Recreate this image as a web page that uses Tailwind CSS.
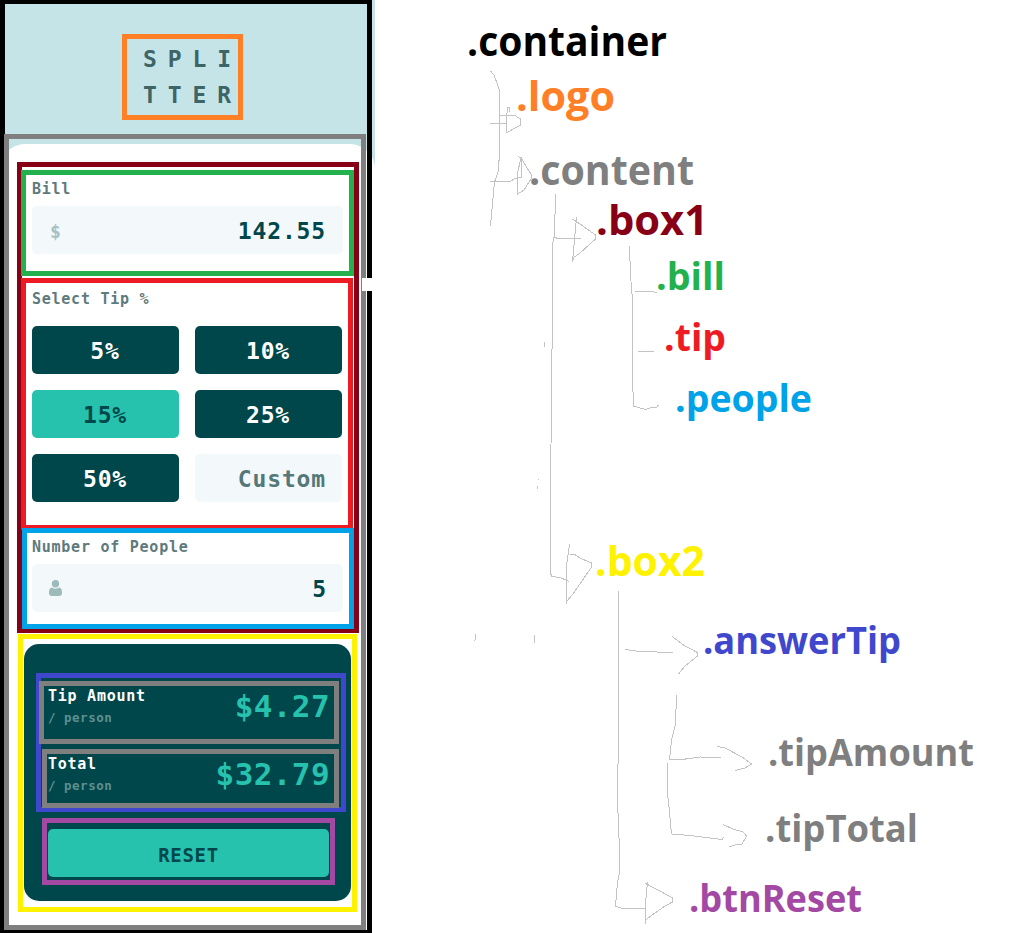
<!DOCTYPE html>
<html lang="en">
<head>
<meta charset="utf-8">
<title>Splitter structure</title>
<script src="https://cdn.jsdelivr.net/npm/@tailwindcss/browser@4"></script>
</head>
<body class="bg-white">
<div class="relative w-[1023px] h-[933px] overflow-hidden bg-white flex">

  <!-- Tip calculator -->
  <main class="w-[375px] h-[933px] shrink-0 flex flex-col bg-[#c5e4e7] font-['DejaVu_Sans_Mono',monospace] font-bold">
    <header class="h-36 shrink-0 flex flex-col pt-[41px] pl-[143px] text-[23px] leading-9 tracking-[10.9px] text-[#3d6467]">
      <div>SPLI</div>
      <div>TTER</div>
    </header>
    <section class="flex-1 bg-white rounded-t-[25px] flex flex-col pt-[35px] pl-8 pr-8 text-[#5e7a7d]">
      <div class="text-[15px] leading-5 tracking-[0.75px]">Bill</div>
      <div class="mt-[7px] w-[311px] h-12 rounded-[5px] bg-[#f3f8fb] flex items-center justify-between pl-[18px] pr-[17px]">
        <span class="text-[18px] text-[#a6c2c3] pt-0.5">$</span>
        <span class="text-[23px] tracking-[0.85px] text-[#00474b] pt-0.5">142.55</span>
      </div>

      <div class="mt-[35px] text-[15px] leading-5 tracking-[0.75px]">Select Tip %</div>
      <div class="mt-[17px] w-[310px] grid grid-cols-2 gap-4 text-[23px] tracking-[0.85px] text-white">
        <div class="h-12 rounded-[5px] bg-[#00474b] flex items-center justify-center pt-0.5 pr-px">5%</div>
        <div class="h-12 rounded-[5px] bg-[#00474b] flex items-center justify-center pt-0.5 pr-px">10%</div>
        <div class="h-12 rounded-[5px] bg-[#26c2ae] text-[#00474b] flex items-center justify-center pt-0.5 pr-px">15%</div>
        <div class="h-12 rounded-[5px] bg-[#00474b] flex items-center justify-center pt-0.5 pr-px">25%</div>
        <div class="h-12 rounded-[5px] bg-[#00474b] flex items-center justify-center pt-0.5 pr-px">50%</div>
        <div class="h-12 rounded-[5px] bg-[#f3f8fb] text-[#547878] flex items-center justify-end pt-0.5 pr-4">Custom</div>
      </div>

      <div class="mt-[35px] text-[15px] leading-5 tracking-[0.75px]">Number of People</div>
      <div class="mt-[7px] w-[311px] h-12 rounded-[5px] bg-[#f3f8fb] flex items-center justify-between pl-[17px] pr-[16px]">
        <svg class="w-[13px] h-4 fill-[#9dbbbb]" viewBox="0 0 13 16"><circle cx="6.5" cy="3.8" r="3.7"/><path d="M2.4 7.6Q6.5 9.9 10.6 7.6Q13 8.6 13 12.2V13.6Q13 16 10.6 16H2.4Q0 16 0 13.6V12.2Q0 8.6 2.4 7.6Z"/></svg>
        <span class="text-[23px] tracking-[0.85px] text-[#00474b] pt-0.5">5</span>
      </div>

      <div class="-ml-2 mt-8 w-[327px] h-[257px] rounded-[15px] bg-[#00474b] flex flex-col pl-6 pr-[21px] pt-[42px]">
        <div class="h-[68px] flex justify-between">
          <div>
            <div class="text-[15px] leading-5 tracking-[0.75px] text-white">Tip Amount</div>
            <div class="mt-0.5 text-[12.5px] leading-5 tracking-[0.5px] text-[#5e9092]">/ person</div>
          </div>
          <div class="text-[31px] leading-10 tracking-[0.4px] text-[#26c2ae]">$4.27</div>
        </div>
        <div class="h-[75px] flex justify-between">
          <div>
            <div class="text-[15px] leading-5 tracking-[0.75px] text-white">Total</div>
            <div class="mt-0.5 text-[12.5px] leading-5 tracking-[0.5px] text-[#5e9092]">/ person</div>
          </div>
          <div class="text-[31px] leading-10 tracking-[0.4px] text-[#26c2ae]">$32.79</div>
        </div>
        <div class="w-[281px] h-12 rounded-[5px] bg-[#26c2ae] text-[#00474b] text-[19px] tracking-[0.7px] flex items-center justify-center pt-1">RESET</div>
      </div>
    </section>
  </main>

  <!-- Coloured outlines drawn over the calculator -->
  <div class="absolute left-0 top-0 w-[372px] h-[933px] border-[5px] border-t-4 border-b-[3px] border-black"></div>
  <div class="absolute left-[122px] top-[34px] w-[121px] h-[86px] border-[5px] border-[#ff7f27]"></div>
  <div class="absolute left-1 top-[134px] w-[362px] h-[796px] border-[5px] border-[#7f7f7f]"></div>
  <div class="absolute left-[362px] top-[278px] w-[10px] h-[13px] bg-white"></div>
  <div class="absolute left-[17px] top-[162px] w-[342px] h-[471px] border-[5px] border-[#880015]"></div>
  <div class="absolute left-[21px] top-[170px] w-[333px] h-[106px] border-[5px] border-[#22b14c]"></div>
  <div class="absolute left-[21px] top-[278px] w-[332px] h-[252px] border-[5px] border-[#ed1c24]"></div>
  <div class="absolute left-[22px] top-[528px] w-[332px] h-[101px] border-[5px] border-[#00a2e8]"></div>
  <div class="absolute left-[18px] top-[634px] w-[339px] h-[278px] border-[5px] border-[#fff200]"></div>
  <div class="absolute left-[36px] top-[673px] w-[310px] h-[139px] border-[5px] border-[#3f48cc]"></div>
  <div class="absolute left-[39px] top-[681px] w-[300px] h-[63px] border-[5px] border-[#7f7f7f]"></div>
  <div class="absolute left-[42px] top-[749px] w-[297px] h-[59px] border-[5px] border-[#7f7f7f]"></div>
  <div class="absolute left-[42px] top-[818px] w-[293px] h-[67px] border-[5px] border-[#a349a4]"></div>

  <!-- Class tree: pencil strokes and labels -->
  <svg class="w-[648px] h-[933px] shrink-0" viewBox="375 0 648 933">
    <g class="fill-none stroke-[#c3c3c3]" stroke-width="1" shape-rendering="crispEdges">
      <path d="M490.500 71L494 75L499.500 90V155L498 172L494.500 182L490.500 226"/>
      <path d="M490 123.500H506M499 115.500H515L520.500 119V125L507 132.500L506.500 116L508 107H509.500V112"/>
      <path d="M490 181.500H510L514 179L521.500 177V158L518 156.500M521 158L531.500 175V178L524 190L517.500 194V173L521 158"/>
      <path d="M555.500 194L554.500 235L552.500 245V300L551.500 400L550.500 490V573L551.500 576L561 578L569.500 581.500"/>
      <path d="M553.500 237L558 238.500H580.500M572.500 219L580 224L595.500 235V239L579 254L574 257L572.500 261.500L574.500 240L576.500 217"/>
      <path d="M629.500 246L630.500 275L632.500 300V377L633.500 406L640 408L646 409.500L651 407.500L657 407L658.500 405M635 291.500H650L657 292.500M638 351.500H654"/>
      <path d="M544.500 342V347M538.500 479V480M537.500 486V489M475.500 634V639L474.500 641M534.500 635V643"/>
      <path d="M569.500 544L568.500 552L566.500 565V603.500M570 554H574L580 558L591.500 563V567L582 581L573 594L567 601"/>
      <path d="M618.500 591V730L617.500 800L619.500 850V873L617.500 882L615.500 906L622 908.500H645M625 649.500L640 651.500L673 652.500M672 636.500L685 646L697.500 652.500V656L685 666L678.500 674"/>
      <path d="M676.500 695L675.500 724L671.500 740L669.500 759.500H682L700 757L721 757.500M717 746.500L725 748L742 757L751.500 764L745 768L735 770.500"/>
      <path d="M667.500 763V793L669.500 812L671.500 834L690 835.500L722 839.500L724 837M723 824.500L733 829L743 832L746.500 836L742 844L735 845L729 847"/>
      <path d="M645.500 924V903L647.500 882M645.500 883.500L660 891L672.500 898V902L665 906L655 913L645.500 920"/>
    </g>
    <g class="font-['Open_Sans',sans-serif] font-bold text-[42px] [font-variant-ligatures:none]">
      <text class="fill-black" x="467" y="55.500" textLength="200" lengthAdjust="spacingAndGlyphs">.container</text>
      <text class="fill-[#ff7f27]" x="516" y="111" textLength="99" lengthAdjust="spacingAndGlyphs">.logo</text>
      <text class="fill-[#7f7f7f]" x="529" y="184.500" textLength="165" lengthAdjust="spacingAndGlyphs">.content</text>
      <text class="fill-[#880015]" x="596" y="235" textLength="112" lengthAdjust="spacingAndGlyphs">.box1</text>
      <text class="fill-[#22b14c] text-[38px]" x="656" y="290" textLength="69" lengthAdjust="spacingAndGlyphs">.bill</text>
      <text class="fill-[#ed1c24] text-[38px]" x="664" y="351" textLength="62" lengthAdjust="spacingAndGlyphs">.tip</text>
      <text class="fill-[#00a2e8] text-[38px]" x="675" y="412" textLength="137" lengthAdjust="spacingAndGlyphs">.people</text>
      <text class="fill-[#fff200]" x="595" y="576" textLength="110" lengthAdjust="spacingAndGlyphs">.box2</text>
      <text class="fill-[#3f48cc] text-[38px]" x="703" y="654" textLength="198" lengthAdjust="spacingAndGlyphs">.answerTip</text>
      <text class="fill-[#7f7f7f] text-[38px]" x="768" y="766" textLength="206" lengthAdjust="spacingAndGlyphs">.tipAmount</text>
      <text class="fill-[#7f7f7f] text-[38px]" x="765" y="842" textLength="153" lengthAdjust="spacingAndGlyphs">.tipTotal</text>
      <text class="fill-[#a349a4] text-[38px]" x="689" y="912" textLength="173" lengthAdjust="spacingAndGlyphs">.btnReset</text>
    </g>
  </svg>
</div>
</body>
</html>
